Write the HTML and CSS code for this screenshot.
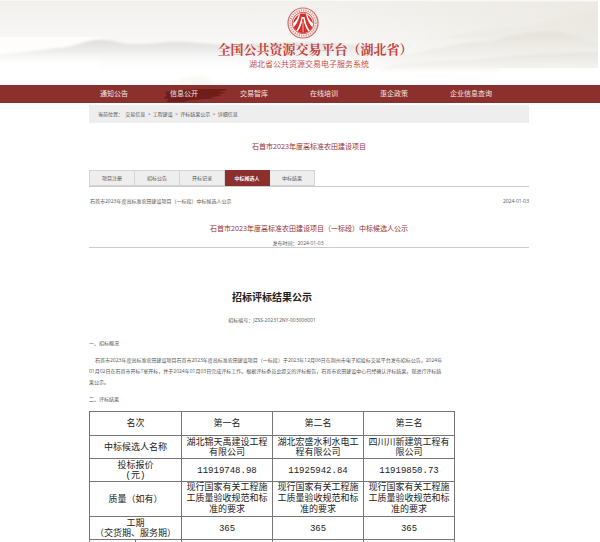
FILE: index.html
```html
<!DOCTYPE html>
<html lang="zh-CN">
<head>
    <meta charset="UTF-8">
    <title>湖北省公共资源交易电子服务系统</title>
    <link rel="stylesheet" href="styles.css">
</head>
<body>
    <!-- Header -->
    <header class="header">
        <svg class="header-bg" viewBox="0 0 600 85" preserveAspectRatio="none" aria-hidden="true">
            <defs>
                <linearGradient id="sky" x1="0" y1="0" x2="0" y2="1">
                    <stop offset="0" stop-color="#f2f0ed"/>
                    <stop offset="0.45" stop-color="#f8f7f5"/>
                    <stop offset="0.85" stop-color="#ffffff"/>
                </linearGradient>
                <linearGradient id="warm" x1="0" y1="0" x2="1" y2="0">
                    <stop offset="0" stop-color="#eeeae1" stop-opacity="0"/>
                    <stop offset="1" stop-color="#e9e6de" stop-opacity="0.7"/>
                </linearGradient>
                <linearGradient id="hill" x1="0" y1="0" x2="0" y2="1">
                    <stop offset="0" stop-color="#dededd"/>
                    <stop offset="0.35" stop-color="#eeeeed"/>
                    <stop offset="0.75" stop-color="#ffffff" stop-opacity="0"/>
                </linearGradient>
                <linearGradient id="hillRight" x1="0" y1="0" x2="0" y2="1">
                    <stop offset="0" stop-color="#e3e1da"/>
                    <stop offset="0.6" stop-color="#f2f1ed"/>
                    <stop offset="1" stop-color="#ffffff" stop-opacity="0"/>
                </linearGradient>
                <filter id="soft"><feGaussianBlur stdDeviation="1"/></filter>
            </defs>
            <rect width="600" height="85" fill="url(#sky)"/>
            <rect x="0" y="37" width="100" height="48" fill="#fff" opacity="0.7"/>
            <rect x="300" y="2" width="298" height="66" fill="url(#warm)"/>
            <g filter="url(#soft)">
                <path d="M-10 56 C20 52 40 51 55 48 C75 48 82 40 100 40 C118 40 120 45 140 44 C160 44 165 41 185 42 C205 43 220 46 250 44 C290 42 310 42 340 44 C380 46 400 52 430 60 V74 H-10Z" fill="url(#hill)"/>
                <path d="M380 60 C430 51 450 44 475 42 C500 42 515 32 540 32 C565 28 580 40 598 42 V72 H380Z" fill="url(#hillRight)"/>
                <path d="M430 40 C470 32 490 26 515 27 C540 26 560 14 598 10 V38 H430Z" fill="#e9e6df" opacity="0.35"/>
                <path d="M380 68 C420 58 460 62 500 57 C540 53 560 53 598 52 V76 H380Z" fill="url(#hillRight)" opacity="0.7"/>
                <path d="M173 84 C180 78 195 74 205 76 C212 80 215 82 216 85Z" fill="#fbf9f4"/>
            </g>
            <rect x="598" y="0" width="2" height="68" fill="#fff"/>
            <rect y="0" width="600" height="1" fill="#f8f8f7"/>
            <rect y="68" x="500" width="100" height="17" fill="#fff" opacity="0.8"/>
        </svg>
        <div class="brand">
            <svg class="logo" viewBox="0 0 64 64" aria-hidden="true">
                <circle cx="32" cy="32" r="30" fill="#fbf4f3" stroke="#cf6a66" stroke-width="2.4"/>
                <circle cx="32" cy="32" r="25.5" fill="none" stroke="#db9794" stroke-width="4" stroke-dasharray="2.4 2.2"/>
                <circle cx="32" cy="32" r="21.5" fill="#fff" stroke="#d8433f" stroke-width="1.8"/>
                <path d="M26 13 H38 L39 19 C41 27 46 36 51 41 A21 21 0 0 1 45 47 C40 40 37 30 35 20 H29 C27 30 24 40 19 47 A21 21 0 0 1 13 41 C18 36 23 27 25 19Z" fill="#d52f2c"/>
                <path d="M31 23 H33 C34 33 38 43 43 49 A21 21 0 0 1 21 49 C26 43 30 33 31 23Z" fill="#d52f2c"/>
                <path d="M24 15 C17 19 13 25 12 33 C17 29 21 23 24 15ZM40 15 C47 19 51 25 52 33 C47 29 43 23 40 15Z" fill="#d52f2c"/>
                <path d="M32 29 V51" stroke="#f5c9c7" stroke-width="1.6"/>
            </svg>
            <h1 class="brand-title">全国公共资源交易平台（湖北省）</h1>
            <p class="brand-sub">湖北省公共资源交易电子服务系统</p>
        </div>
    </header>

    <!-- Main Menu -->
    <nav class="nav">
        <ul class="nav-list">
            <li><a href="#">通知公告</a></li>
            <li class="current">
                <svg class="brush" viewBox="0 0 70 16" aria-hidden="true">
                    <path d="M2 4 L22 2 L45 1 L69 1 L66 3 L58 4 L67 5 L58 7 L63 8 L50 10 L56 11 L40 12 L28 13 L22 15 L3 15 L6 12 L0 11 L4 8Z" fill="#6f1d1a"/>
                </svg>
                <a href="#">信息公开</a>
            </li>
            <li><a href="#">交易智库</a></li>
            <li><a href="#">在线培训</a></li>
            <li><a href="#">惠企政策</a></li>
            <li><a href="#">企业信息查询</a></li>
        </ul>
    </nav>

    <main class="wrap">
        <div class="crumbs">当前位置： <a href="#">交易信息</a> &gt; <a href="#">工程建设</a> &gt; <a href="#">评标结果公示</a> &gt; <a href="#">详细信息</a></div>

        <h2 class="project">石首市2023年度高标准农田建设项目</h2>

        <!-- Tabs -->
        <div class="tabs">
            <a href="#">项目注册</a>
            <a href="#">招标公告</a>
            <a href="#">开标记录</a>
            <a href="#" class="active">中标候选人</a>
            <a href="#">中标结果</a>
        </div>

        <div class="entry">
            <a href="#">石首市2023年度高标准农田建设项目（一标段）中标候选人公示</a>
            <span>2024-01-03</span>
        </div>

        <h2 class="notice-title">石首市2023年度高标准农田建设项目（一标段）中标候选人公示</h2>
        <p class="date">发布时间：2024-01-03</p>

        <!-- Notice -->
        <article class="notice">
            <h3>招标评标结果公示</h3>
            <p class="number">招标编号：JZSS-202312NY-003006001</p>
            <p>一、招标概况</p>
            <p class="detail">石首市2023年度高标准农田建设项目石首市2023年度高标准农田建设项目（一标段）于2023年12月06日在荆州市电子招投标交易平台发布招标公告，2024年<br>01月02日在石首市开标1室开标，并于2024年01月03日完成评标工作。根据评标委员会提交的评标报告，石首市农田建设中心已经确认评标结果，现进行评标结<br>果公示。</p>
            <p>二、评标结果</p>

            <table class="result">
                <colgroup>
                    <col class="half"><col class="half"><col><col><col>
                </colgroup>
                <tr class="names">
                    <th colspan="2">名次</th>
                    <th>第一名</th>
                    <th>第二名</th>
                    <th>第三名</th>
                </tr>
                <tr>
                    <th colspan="2">中标候选人名称</th>
                    <td>湖北锦天禹建设工程有限公司</td>
                    <td>湖北宏盛水利水电工程有限公司</td>
                    <td>四川川新建筑工程有限公司</td>
                </tr>
                <tr>
                    <th colspan="2">投标报价<br>(元)</th>
                    <td>11919748.98</td>
                    <td>11925942.84</td>
                    <td>11919850.73</td>
                </tr>
                <tr class="quality">
                    <th colspan="2">质量（如有）</th>
                    <td>现行国家有关工程施工质量验收规范和标准的要求</td>
                    <td>现行国家有关工程施工质量验收规范和标准的要求</td>
                    <td>现行国家有关工程施工质量验收规范和标准的要求</td>
                </tr>
                <tr>
                    <th colspan="2">工期<br>（交货期、服务期）</th>
                    <td>365</td>
                    <td>365</td>
                    <td>365</td>
                </tr>
                <tr>
                    <td></td>
                    <td></td>
                    <td></td>
                    <td></td>
                    <td></td>
                </tr>
            </table>
        </article>
    </main>
</body>
</html>
```
FILE: styles.css
```css
/* General */
* {
    box-sizing: border-box;
}

body {
    margin: 0;
    background-color: #fff;
    color: #555;
    font-family: "Open Sans", "Noto Sans CJK SC", sans-serif;
    font-size: 5px;
    line-height: 11px;
}

h1, h2, h3, p, ul {
    margin: 0;
    padding: 0;
    font-weight: normal;
}

a {
    color: inherit;
    text-decoration: none;
}

.wrap {
    margin: 0 71px 0 89px;
}

/* Header */
.header {
    position: relative;
    height: 85px;
    padding: 7px 71px 0 89px;
}

.header-bg {
    position: absolute;
    top: 0;
    left: 0;
    width: 100%;
    height: 100%;
}

.brand {
    position: relative;
    display: flex;
    flex-direction: column;
    align-items: center;
}

.logo {
    width: 32px;
    height: 32px;
    margin-right: 12px;
}

.brand-title {
    margin-left: 12px;
    color: #c8403a;
    font-family: "Noto Serif CJK SC", "Noto Sans CJK SC", serif;
    font-size: 13px;
    font-weight: bold;
    line-height: 20px;
    white-space: nowrap;
}

.brand-sub {
    color: #c9504b;
    font-size: 8px;
    line-height: 10px;
}

/* Main menu */
.nav {
    height: 18px;
    padding-left: 100px;
    background-color: #8b302c;
    color: #f3e4e3;
    font-size: 7px;
    line-height: 18px;
}

.nav-list {
    display: flex;
    list-style: none;
}

.nav-list li {
    position: relative;
    width: 70px;
    white-space: nowrap;
}

.nav-list a {
    position: relative;
}

.brush {
    position: absolute;
    top: 3px;
    left: -9px;
    width: 70px;
    height: 15px;
}

/* Breadcrumb */
.crumbs {
    height: 18px;
    margin-top: 2px;
    padding-left: 9px;
    background-color: #eee;
    line-height: 18px;
}

.crumbs a {
    margin: 0 1px;
}

/* Titles */
.project,
.notice-title {
    color: #96302d;
    font-size: 7px;
    line-height: 11px;
    text-align: center;
}

.project {
    margin: 18px 0;
}

/* Tabs */
.tabs {
    display: flex;
    border-bottom: 1px solid #ccc;
}

.tabs a {
    width: 45px;
    height: 16px;
    border: 1px solid #d4d4d4;
    border-left-width: 0;
    background-color: #eee;
    line-height: 14px;
    text-align: center;
}

.tabs a:first-child {
    width: 46px;
    border-left-width: 1px;
}

.tabs .active {
    border-color: #8b302c;
    background-color: #8b302c;
    color: #fff;
    font-weight: bold;
}

.entry {
    display: flex;
    justify-content: space-between;
    margin: 9px 0 16px;
    padding-left: 1px;
}

.date {
    margin-top: 5px;
    padding-right: 22px;
    border-bottom: 1px solid #ccc;
    line-height: 8px;
    text-align: center;
}

/* Notice */
.notice {
    width: 366px;
    padding-top: 42px;
}

.notice h3 {
    color: #222;
    font-size: 10px;
    font-weight: bold;
    line-height: 14px;
    text-align: center;
}

.notice p {
    margin-bottom: 6px;
}

.notice .number {
    margin: 11px 0 12px;
    text-align: center;
}

.notice .detail {
    text-indent: 6px;
    white-space: nowrap;
}

/* Result table */
.result {
    width: 100%;
    border-collapse: collapse;
    table-layout: fixed;
    color: #222;
    font-family: "Liberation Mono", "Noto Sans CJK SC", monospace;
    font-size: 9px;
    line-height: 10px;
}

.result .half {
    width: 46px;
}

.result th,
.result td {
    height: 23px;
    padding: 1px 2px 0;
    border: 1px solid #777;
    font-weight: normal;
    text-align: center;
}

.result .names th {
    height: 24px;
}

.result .quality td {
    height: 35px;
    line-height: 11px;
}
```
